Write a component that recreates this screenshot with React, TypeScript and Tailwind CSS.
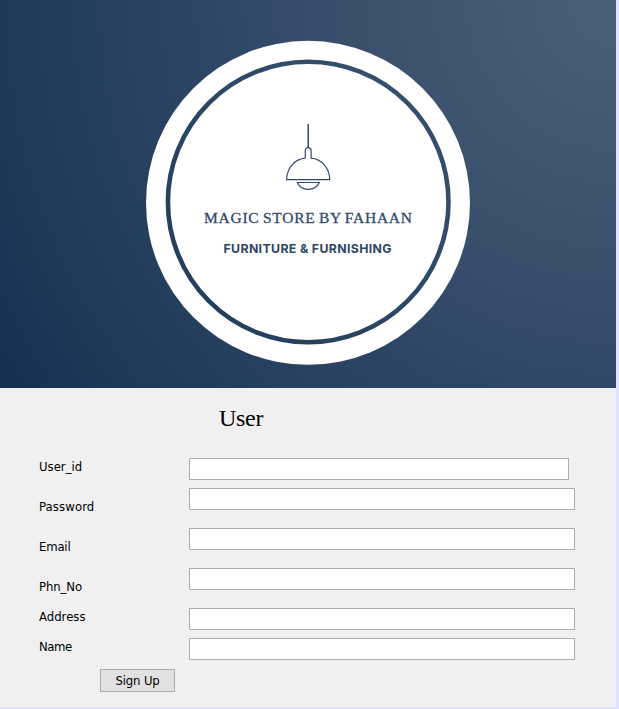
type Field = { label: string; row: string; labelHeight: string; input: string; tracking: string };

const fields: Field[] = [
  { label: "User_id", row: "h-[30px]", labelHeight: "h-[18px]", input: "w-[380px]", tracking: "tracking-normal" },
  { label: "Password", row: "h-10", labelHeight: "h-[38px]", input: "w-[386px]", tracking: "tracking-[0.1px]" },
  { label: "Email", row: "h-10", labelHeight: "h-[38px]", input: "w-[386px]", tracking: "tracking-[-0.2px]" },
  { label: "Phn_No", row: "h-10", labelHeight: "h-[38px]", input: "w-[386px]", tracking: "tracking-[-0.1px]" },
  { label: "Address", row: "h-[30px]", labelHeight: "h-[18px]", input: "w-[386px]", tracking: "tracking-normal" },
  { label: "Name", row: "h-[30px]", labelHeight: "h-[18px]", input: "w-[386px]", tracking: "tracking-[-0.4px]" },
];

function Logo() {
  return (
    <svg width="616" height="388" viewBox="0 0 616 388" className="block">
      <defs>
        <linearGradient id="ring" x1="0" y1="1" x2="1" y2="0">
          <stop offset="0" stopColor="#213c5a" />
          <stop offset="0.5" stopColor="#2c4766" />
          <stop offset="1" stopColor="#3b5270" />
        </linearGradient>
      </defs>
      <circle cx="308" cy="202.8" r="162" fill="#fff" />
      <circle cx="308.2" cy="202" r="140.3" fill="none" stroke="url(#ring)" strokeWidth="4.6" />
      <g fill="none" stroke="#304a6b" strokeWidth="1.2">
        <path d="M308.2 124V147.5" strokeWidth="1.5" />
        <path d="M305.3 158.2V150.5a2.9 2.9 0 0 1 5.8 0V158.2C321.5 159 329.6 168 329.8 179.7H286.6C286.8 168 294.9 159 305.3 158.2" />
        <path d="M297.3 182.5H319.3C317.5 186.8 313.3 189.3 308.3 189.3S299.1 186.8 297.3 182.5Z" />
      </g>
      <text x="204" y="222.6" textLength="208" wordSpacing="-1.2" fontSize="15.5" fill="#304a6b" stroke="#304a6b" strokeWidth="0.3" className="font-['Liberation_Serif',serif]">
        MAGIC STORE BY FAHAAN
      </text>
      <text x="223.5" y="253" textLength="168" fontSize="12.3" fontWeight="700" fill="#2d4766" className="font-['Inter',sans-serif]">
        FURNITURE &amp; FURNISHING
      </text>
    </svg>
  );
}

export default function App() {
  return (
    <div className="h-[709px] w-[619px] overflow-hidden bg-[#e0e0ff] pr-[3px] pb-[2px]">
      <div className="flex h-full flex-col bg-[#f0f0f0] text-black">
        <header className="h-[388px] bg-[radial-gradient(circle_at_100%_0%,#4a5f77_0%,#3c516d_32%,#334968_49%,#2b4463_60%,#1e3a58_84%,#142f51_100%)]">
          <Logo />
        </header>
        <h1 className="h-[70px] pt-[16px] pl-[219px] font-['Liberation_Serif',serif] text-[24px] leading-[28px] tracking-[-0.3px]">
          User
        </h1>
        <form className="font-['DejaVu_Sans_Condensed','DejaVu_Sans',sans-serif] text-[13px]">
          {fields.map((f) => (
            <div key={f.label} className={`flex items-start pl-[39px] ${f.row}`}>
              <label className={`flex w-[150px] shrink-0 items-center ${f.labelHeight} ${f.tracking}`}>{f.label}</label>
              <input aria-label={f.label} className={`h-[22px] border border-[#abadb3] bg-white px-1 outline-none ${f.input}`} />
            </div>
          ))}
          <button type="button" className="mt-px ml-[100px] block h-[23px] w-[75px] border border-[#adadad] bg-[#e1e1e1] text-center leading-[21px] tracking-[-0.15px]">
            Sign Up
          </button>
        </form>
      </div>
    </div>
  );
}
